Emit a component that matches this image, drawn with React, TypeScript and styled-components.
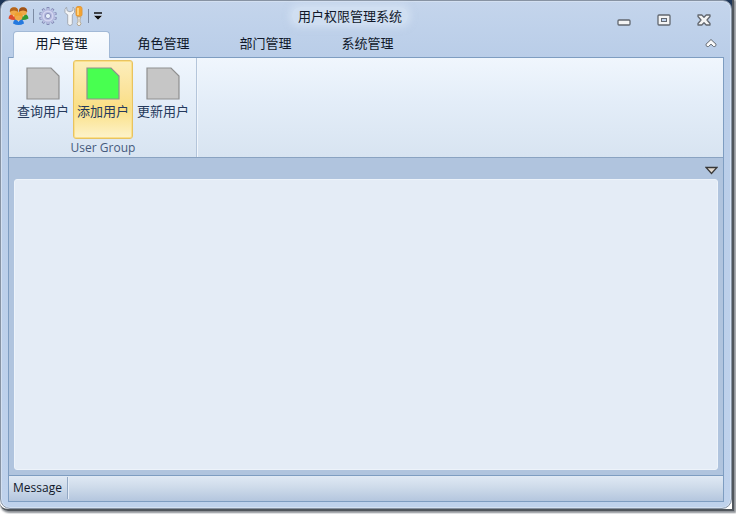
import React, { useState } from "react";
import styled, { createGlobalStyle, css } from "styled-components";

const GlobalStyle = createGlobalStyle`
  *, *::before, *::after { box-sizing: border-box; }
  body {
    margin: 0;
    font-family: "Open Sans", "Noto Sans CJK SC", sans-serif;
    font-size: 12px;
    color: #10182a;
  }
  button { font: inherit; color: inherit; padding: 0; border: 0; background: none; }
`;

const Desktop = styled.div`
  height: 100vh;
  min-height: 320px;
  padding: 0 2px 3px 0;
  overflow: hidden;
  background: #fff;
`;

const Backdrop = styled.div`
  height: 100%;
  border-right: 2px solid #50565c;
  border-bottom: 2px solid #50565c;
  border-bottom-left-radius: 8px;
  background: linear-gradient(#1d3557 0, #1d3557 12px, #fff 24px);
  box-shadow: 1px 1px 2px 1px #8b8f94;
`;

const Window = styled.div`
  height: 100%;
  display: flex;
  flex-direction: column;
  padding: 0 7px 6px 7px;
  border: 1px solid #8793a3;
  border-radius: 9px 9px 10px 10px;
  background: linear-gradient(#c4d5ec 0, #b9cde8 58px, #bfd2ec 100%);
  box-shadow: inset 0 0 0 1px #d3e0f1;
`;

const TitleBar = styled.header`
  flex: none;
  height: 30px;
  display: grid;
  grid-template-columns: 1fr auto 1fr;
  align-items: center;
`;

const QuickAccess = styled.div`
  display: flex;
  align-items: center;
`;

const QuickButton = styled.button`
  display: flex;
  height: 22px;
  align-items: center;
`;

const ToolButton = styled(QuickButton)`
  margin-left: 6px;
`;

const Divider = styled.span`
  width: 1px;
  height: 14px;
  margin: 0 4px;
  background: #7c8ba3;
`;

const Title = styled.h1`
  margin: 0 0 0 -32px;
  padding: 0 6px;
  font-size: 13px;
  font-weight: 400;
  line-height: 18px;
  border-radius: 8px;
  background: rgba(222, 234, 248, 0.5);
  box-shadow: 0 0 6px 3px rgba(222, 234, 248, 0.5);
`;

const WindowControls = styled.div`
  display: flex;
  justify-content: flex-end;
  gap: 24px;
  padding: 8px 12px 0 0;
`;

const ControlButton = styled.button`
  display: flex;
  width: 16px;
  height: 16px;
  align-items: center;
  justify-content: center;
`;

const TabStrip = styled.nav`
  flex: none;
  height: 27px;
  display: flex;
  gap: 5px;
  padding: 0 5px;
  margin-bottom: -1px;
`;

const Tab = styled.button<{ $active: boolean }>`
  z-index: 1;
  width: 97px;
  height: 27px;
  padding-bottom: 4px;
  font-size: 13px;
  line-height: 18px;
  border: 1px solid transparent;
  border-bottom: 0;
  border-radius: 4px 4px 0 0;
  ${(p) =>
    p.$active &&
    css`
      border-color: #a2b9d6;
      background: linear-gradient(#f8fbfe, #eff5fc);
    `}
`;

const CollapseButton = styled(ControlButton)`
  margin: 4px 0 0 auto;
`;

const Client = styled.div`
  flex: 1;
  min-height: 0;
  display: flex;
  flex-direction: column;
  border: 1px solid #7e9dc1;
`;

const Ribbon = styled.section`
  flex: none;
  height: 100px;
  display: flex;
  border-bottom: 1px solid #8aa3c1;
  background: linear-gradient(#f0f6fd 0, #e3edf8 45%, #d8e4f1 100%);
`;

const RibbonGroup = styled.div`
  display: flex;
  flex-direction: column;
  padding: 2px 3px 0 4px;
  border-right: 1px solid #b4c5da;
  box-shadow: 1px 0 0 #f1f6fc;
`;

const GroupItems = styled.div`
  display: flex;
`;

const RibbonButton = styled.button<{ $active: boolean }>`
  width: 60px;
  height: 79px;
  display: flex;
  flex-direction: column;
  align-items: center;
  gap: 2px;
  padding-top: 6px;
  font-size: 13px;
  line-height: 18px;
  color: #253a5d;
  border: 1px solid transparent;
  border-radius: 3px;
  ${(p) =>
    p.$active &&
    css`
      border-color: #e8c360;
      background: linear-gradient(#fceebc 0, #fbe39a 40%, #fadf83 62%, #fdf3cb 100%);
      box-shadow: inset 0 0 0 1px #fbe08a;
    `}
`;

const GroupLabel = styled.div`
  font-size: 12px;
  line-height: 18px;
  text-align: center;
  color: #465a7c;
`;

const Workspace = styled.main`
  flex: 1;
  min-height: 0;
  display: flex;
  flex-direction: column;
  padding: 0 5px 5px;
  background: #b0c4de;
`;

const WorkspaceBar = styled.div`
  flex: none;
  height: 21px;
  display: flex;
  align-items: center;
  justify-content: flex-end;
  padding-top: 4px;
`;

const Document = styled.div`
  flex: 1;
  border: 1px solid #edf3fa;
  border-radius: 3px;
  background: #e4ecf6;
`;

const StatusBar = styled.footer`
  flex: none;
  height: 26px;
  display: flex;
  align-items: stretch;
  padding: 1px 0 2px;
  border-top: 1px solid #7e9dc1;
  background: linear-gradient(#e0e9f4 0, #cedbea 45%, #b4c6de 100%);
`;

const StatusCell = styled.span`
  padding: 0 5px 0 4px;
  line-height: 22px;
  border-right: 1px solid #93a8c4;
  box-shadow: 1px 0 0 #e3ecf7;
`;

const Person = ({ x, y, shirt, hair }: { x: number; y: number; shirt: string; hair: string }) => (
  <g transform={`translate(${x} ${y})`}>
    <path d="M-0.500 11Q0 7 3 6.500H7Q10 7 10.500 11Q5 14 -0.500 11Z" fill={shirt} />
    <path d="M3 6.500H7L5 9.500Z" fill="#fff" opacity="0.8" />
    <circle cx="5" cy="4" r="4" fill="#f0a848" />
    <path d="M0.800 4.500Q0.500 -0.300 5 -0.300Q9.500 -0.300 9.200 4.500Q7.500 3 5 3Q2.500 3 0.800 4.500Z" fill={hair} />
  </g>
);

const UsersIcon = () => (
  <svg width="21" height="20" viewBox="0 0 21 20" aria-hidden="true">
    <Person x={1} y={1.5} shirt="#df4b2d" hair="#b5651b" />
    <Person x={10} y={1.5} shirt="#319a35" hair="#a05318" />
    <Person x={5.5} y={6.5} shirt="#2479df" hair="#eda02f" />
  </svg>
);

const GearIcon = () => (
  <svg width="20" height="20" viewBox="0 0 20 20" aria-hidden="true">
    <g stroke="#8289b5" strokeWidth="2.800">
      {[0, 36, 72, 108, 144].map((a) => (
        <path key={a} d="M10 1V19" transform={`rotate(${a} 10 10)`} />
      ))}
    </g>
    <g stroke="#c6caea" strokeWidth="1.400">
      {[0, 36, 72, 108, 144].map((a) => (
        <path key={a} d="M10 2V18" transform={`rotate(${a} 10 10)`} />
      ))}
    </g>
    <circle cx="10" cy="10" r="6.800" fill="#b4b9df" />
    <circle cx="10" cy="10" r="4.800" fill="none" stroke="#d3d6f0" strokeWidth="1.500" />
    <circle cx="10" cy="10" r="2.600" fill="#e6effa" stroke="#8e94be" />
  </svg>
);

const ToolsIcon = () => (
  <svg width="20" height="20" viewBox="0 0 20 20" aria-hidden="true">
    <path
      d="M2.500 1Q0 3.500 1 6.500Q1.800 8 3.700 8.800V17.500Q4 19.500 6 19.500Q8 19.500 8.300 17.500V8.800Q11 7 10.800 4Q10.500 2 9 1V4.500L6 5.800L3.200 4.800Z"
      fill="#f4f5f6"
      stroke="#a4abb5"
    />
    <rect x="12" y="0.500" width="6" height="10" rx="2" fill="#f5a32f" stroke="#e0993c" />
    <path d="M14 2V9" stroke="#ffdf94" strokeWidth="1.500" />
    <path d="M13 11H17L16 13V16L17 17.500L16 19.500H14L13 17.500L14 16V13Z" fill="#f3f0e8" stroke="#b5a995" />
  </svg>
);

const MoreIcon = () => (
  <svg width="10" height="10" viewBox="0 0 10 10" aria-hidden="true">
    <path d="M1 2H9" stroke="#111" strokeWidth="1.500" />
    <path d="M0.500 4.500H9.500L5 9Z" fill="#111" stroke="#e6effa" strokeWidth="0.500" />
  </svg>
);

const MinimizeIcon = () => (
  <svg width="14" height="14" viewBox="0 0 14 14" aria-hidden="true">
    <rect x="1" y="7" width="12" height="5" rx="1" fill="#f4f4f4" stroke="#62676f" strokeWidth="1.300" />
  </svg>
);

const MaximizeIcon = () => (
  <svg width="14" height="14" viewBox="0 0 14 14" aria-hidden="true">
    <rect x="1" y="2" width="12" height="10" rx="1" fill="#f4f4f4" stroke="#62676f" strokeWidth="1.300" />
    <rect x="4.500" y="5.500" width="5" height="3" fill="#bfd2ec" stroke="#62676f" />
  </svg>
);

const CloseIcon = () => (
  <svg width="14" height="14" viewBox="0 0 14 14" aria-hidden="true">
    <path
      d="M1 2H4.800L7 4.300L9.200 2H13V3.500L10 7L13 10.500V12H9.200L7 9.700L4.800 12H1V10.500L4 7L1 3.500Z"
      fill="#f4f4f4"
      stroke="#62676f"
      strokeWidth="1.300"
      strokeLinejoin="round"
    />
  </svg>
);

const CollapseIcon = () => (
  <svg width="12" height="10" viewBox="0 0 12 10" aria-hidden="true">
    <path
      d="M6 1.500L11 6.200V7.500L9.800 8.500H8.500L6 6.200L3.500 8.500H2.200L1 7.500V6.200Z"
      fill="#fafafa"
      stroke="#62676f"
      strokeLinejoin="round"
    />
  </svg>
);

const DropIcon = () => (
  <svg width="13" height="9" viewBox="0 0 13 9" aria-hidden="true">
    <path d="M1 1.500H12L6.500 7.500Z" fill="#e2d9cf" stroke="#383838" strokeWidth="1.300" />
  </svg>
);

const PageIcon = ({ fill }: { fill: string }) => (
  <svg width="34" height="33" viewBox="0 0 34 33" aria-hidden="true">
    <path d="M1 1H25L33 9V32H1Z" fill={fill} stroke="#8f8f8f" strokeWidth="1.200" />
  </svg>
);

const tabs = ["用户管理", "角色管理", "部门管理", "系统管理"];
const commands = ["查询用户", "添加用户", "更新用户"];

export default function App() {
  const [tab, setTab] = useState(0);
  const [command, setCommand] = useState(1);

  return (
    <>
      <GlobalStyle />
      <Desktop>
        <Backdrop>
          <Window>
            <TitleBar>
              <QuickAccess>
                <QuickButton aria-label="Users"><UsersIcon /></QuickButton>
                <Divider />
                <QuickButton aria-label="Settings"><GearIcon /></QuickButton>
                <ToolButton aria-label="Tools"><ToolsIcon /></ToolButton>
                <Divider />
                <QuickButton aria-label="Customize"><MoreIcon /></QuickButton>
              </QuickAccess>
              <Title>用户权限管理系统</Title>
              <WindowControls>
                <ControlButton aria-label="Minimize"><MinimizeIcon /></ControlButton>
                <ControlButton aria-label="Maximize"><MaximizeIcon /></ControlButton>
                <ControlButton aria-label="Close"><CloseIcon /></ControlButton>
              </WindowControls>
            </TitleBar>
            <TabStrip>
              {tabs.map((name, i) => (
                <Tab key={name} $active={i === tab} onClick={() => setTab(i)}>{name}</Tab>
              ))}
              <CollapseButton aria-label="Collapse ribbon"><CollapseIcon /></CollapseButton>
            </TabStrip>
            <Client>
              <Ribbon>
                <RibbonGroup>
                  <GroupItems>
                    {commands.map((name, i) => (
                      <RibbonButton key={name} $active={i === command} onClick={() => setCommand(i)}>
                        <PageIcon fill={i === command ? "#48ff50" : "#c6c6c6"} />
                        {name}
                      </RibbonButton>
                    ))}
                  </GroupItems>
                  <GroupLabel>User Group</GroupLabel>
                </RibbonGroup>
              </Ribbon>
              <Workspace>
                <WorkspaceBar>
                  <QuickButton aria-label="Open documents"><DropIcon /></QuickButton>
                </WorkspaceBar>
                <Document />
              </Workspace>
              <StatusBar>
                <StatusCell>Message</StatusCell>
              </StatusBar>
            </Client>
          </Window>
        </Backdrop>
      </Desktop>
    </>
  );
}
